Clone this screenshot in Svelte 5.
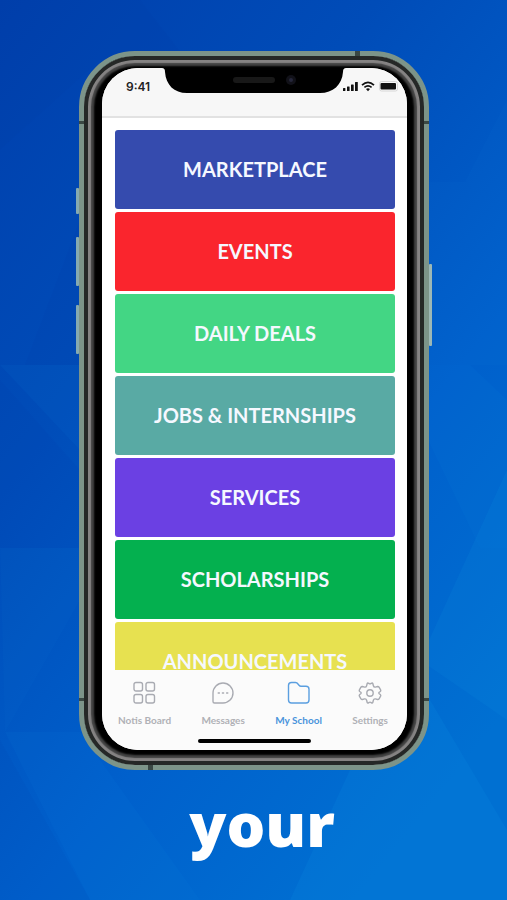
<script lang="ts">
	type Category = { title: string; color: string };
	type Tab = { id: string; label: string };

	const categories: Category[] = [
		{ title: 'MARKETPLACE', color: '#354bae' },
		{ title: 'EVENTS', color: '#fa252d' },
		{ title: 'DAILY DEALS', color: '#43d684' },
		{ title: 'JOBS & INTERNSHIPS', color: '#59aaa4' },
		{ title: 'SERVICES', color: '#6b40e3' },
		{ title: 'SCHOLARSHIPS', color: '#04b04f' },
		{ title: 'ANNOUNCEMENTS', color: '#e7e150' }
	];

	const tabs: Tab[] = [
		{ id: 'board', label: 'Notis Board' },
		{ id: 'messages', label: 'Messages' },
		{ id: 'school', label: 'My School' },
		{ id: 'settings', label: 'Settings' }
	];

	let active = $state('school');
</script>

<main class="promo">
	<svg class="backdrop" viewBox="0 0 507 900" preserveAspectRatio="none" aria-hidden="true">
		<defs>
			<linearGradient id="sky" x1="0" y1="0" x2="0.7" y2="1">
				<stop offset="0" stop-color="#003fac" />
				<stop offset="0.35" stop-color="#004cb8" />
				<stop offset="0.7" stop-color="#0060cc" />
				<stop offset="1" stop-color="#0070d2" />
			</linearGradient>
		</defs>
		<rect width="507" height="900" fill="url(#sky)" />
		<g fill="#0a8ae0">
			<polygon points="507,100 465,182 428,182 428,365 507,365" opacity="0.06" />
			<polygon points="428,365 470,365 507,400 507,548 480,548 428,440" opacity="0.08" />
			<polygon points="507,470 507,720 420,660" opacity="0.18" />
			<polygon points="350,770 430,700 507,830 507,900 290,900" opacity="0.2" />
			<polygon points="0,365 80,365 80,450" opacity="0.08" />
			<polygon points="0,548 80,548 80,600 5,732" opacity="0.06" />
			<polygon points="5,732 80,732 200,900 90,900" opacity="0.08" />
		</g>
		<g fill="#0030a0">
			<polygon points="0,0 140,0 180,51 100,60 0,150" opacity="0.06" />
			<polygon points="0,380 80,470 80,548 0,548" opacity="0.08" />
			<polygon points="80,220 80,365 25,365" opacity="0.05" />
			<polygon points="0,740 90,900 0,900" opacity="0.06" />
		</g>
	</svg>

	<div class="phone">
		<span class="side mute"></span>
		<span class="side volume-up"></span>
		<span class="side volume-down"></span>
		<span class="side power"></span>
		<span class="band top"></span>
		<span class="band bottom"></span>
		<span class="band left upper"></span>
		<span class="band left lower"></span>
		<span class="band right upper"></span>
		<span class="band right lower"></span>

		<div class="screen">
			<header class="status">
				<span class="time">9:41</span>
				<svg class="signals" viewBox="0 0 56 12" aria-hidden="true">
					<g fill="#111">
						<rect x="0" y="8" width="2.4" height="3" rx="0.5" />
						<rect x="4" y="6.5" width="2.6" height="4.5" rx="0.5" />
						<rect x="8" y="4.5" width="2.7" height="6.5" rx="0.5" />
						<rect x="12" y="2" width="2.8" height="9" rx="0.5" />
						<rect x="37.5" y="3" width="15.5" height="6.5" rx="1" />
					</g>
					<g fill="none" stroke="#111" stroke-width="1.7">
						<path d="M19 5.2Q25 -0.4 31 5.2" />
						<path d="M21.4 7.4Q25 4.4 28.6 7.4" />
					</g>
					<path d="M23 9Q25 7.4 27 9L25 11.2Z" fill="#111" />
					<rect x="36.5" y="1.5" width="18" height="9.5" rx="2" fill="none" stroke="#d8d8d8" />
				</svg>
			</header>

			<svg class="notch" viewBox="0 0 184 26" aria-hidden="true">
				<path d="M0 0C2 0 3 1 3 4C4 17 12 25 25 25H158C171 25 180 17 181 4C181 1 182 0 184 0Z" fill="#000" />
				<rect x="71" y="9" width="42" height="6" rx="3" fill="#181818" />
				<circle cx="129" cy="12" r="5" fill="#111118" />
				<circle cx="129" cy="12" r="2" fill="#25263a" />
			</svg>

			<div class="list">
				{#each categories as category}
					<button class="tile" style="background: {category.color}">{category.title}</button>
				{/each}
			</div>

			<nav class="tabs">
				{#each tabs as tab}
					<button class="tab" class:active={active === tab.id} onclick={() => (active = tab.id)}>
						<svg viewBox="0 0 24 24" aria-hidden="true">
							{#if tab.id === 'board'}
								<rect x="1" y="1.5" width="8.5" height="8.5" rx="2" />
								<rect x="13" y="1.5" width="8.5" height="8.5" rx="2" />
								<rect x="1" y="13.5" width="8.5" height="8.5" rx="2" />
								<rect x="13" y="13.5" width="8.5" height="8.5" rx="2" />
							{:else if tab.id === 'messages'}
								<path d="M2 20.5V12A10 10 0 1 1 12 22H3.5Q2 22 2 20.5Z" />
								<path d="M7.2 12h1.2M11.4 12h1.2M15.6 12h1.2" />
							{:else if tab.id === 'school'}
								<path d="M1.5 4.5Q1.5 1.5 4.5 1.5H8.5Q10 1.5 11 3L12 4.2Q12.8 5.2 14 5.2H19Q22 5.2 22 8.2V19Q22 22 19 22H4.5Q1.5 22 1.5 19Z" />
							{:else}
								<path d="M9.2 2.5Q9.6 1.5 10.8 2.4Q12 3.3 13.2 2.4Q14.4 1.5 14.8 2.5L15.4 4.8Q15.8 6.4 17.4 6.1L19.6 5.5Q20.6 5.4 21.2 6.4L22.6 8.8Q23.1 9.8 22.3 10.5L21.2 11.3Q20.5 12 21.2 12.7L22.3 13.5Q23.1 14.2 22.6 15.2L21.2 17.6Q20.6 18.6 19.6 18.5L17.4 17.9Q15.8 17.6 15.4 19.2L14.8 21.5Q14.4 22.5 13.2 21.6Q12 20.7 10.8 21.6Q9.6 22.5 9.2 21.5L8.6 19.2Q8.2 17.6 6.6 17.9L4.4 18.5Q3.4 18.6 2.8 17.6L1.4 15.2Q0.9 14.2 1.7 13.5L2.8 12.7Q3.5 12 2.8 11.3L1.7 10.5Q0.9 9.8 1.4 8.8L2.8 6.4Q3.4 5.4 4.4 5.5L6.6 6.1Q8.2 6.4 8.6 4.8Z" />
								<circle cx="12" cy="12" r="3.2" />
							{/if}
						</svg>
						<span>{tab.label}</span>
					</button>
				{/each}
			</nav>
			<div class="home"><span></span></div>
		</div>
	</div>

	<p class="caption">your</p>
</main>

<style>
	:global(body) {
		margin: 0;
	}

	.promo {
		position: relative;
		box-sizing: border-box;
		display: flex;
		flex-direction: column;
		height: 100vh;
		min-height: 600px;
		padding: 51px 78px 0 79px;
		overflow: hidden;
		background: #0052bf;
	}

	.backdrop {
		position: absolute;
		inset: 0;
		width: 100%;
		height: 100%;
	}

	.phone {
		position: relative;
		box-sizing: border-box;
		display: flex;
		flex: 1;
		min-height: 0;
		padding: 12px 17px 15px 18px;
		border: 5px solid #7c9489;
		border-radius: 56px;
		background: #000;
		box-shadow:
			inset 0 0 0 4px #252827,
			inset 0 0 1px 7px #858383,
			inset 0 0 2px 10px #444;
	}

	.side {
		position: absolute;
		left: -8px;
		width: 3px;
		background: #86aab0;
		border-radius: 1px;
	}

	.mute {
		top: 132px;
		height: 26px;
	}

	.volume-up {
		top: 181px;
		height: 49px;
	}

	.volume-down {
		top: 249px;
		height: 49px;
	}

	.power {
		top: 208px;
		right: -8px;
		left: auto;
		height: 82px;
		background: #9db8b5;
	}

	.band {
		position: absolute;
		width: 5px;
		height: 5px;
		background: #3a4844;
	}

	.band.top {
		top: -5px;
		right: 64px;
	}

	.band.bottom {
		bottom: -5px;
		left: 64px;
	}

	.band.left {
		left: -5px;
		height: 3px;
	}

	.band.right {
		right: -5px;
		height: 3px;
	}

	.band.upper {
		top: 65px;
	}

	.band.lower {
		bottom: 64px;
	}

	.screen {
		position: relative;
		display: flex;
		flex: 1;
		flex-direction: column;
		min-width: 0;
		overflow: hidden;
		border-radius: 36px;
		background: #fff;
	}

	.status {
		box-sizing: border-box;
		display: flex;
		flex-shrink: 0;
		justify-content: space-between;
		height: 50px;
		padding: 12px 8px 0 24px;
		border-bottom: 2px solid #e2e2e2;
		background: #f7f7f7;
	}

	.time {
		color: #222;
		font-family: Inter, sans-serif;
		font-size: 12px;
		font-weight: 600;
		line-height: 14px;
	}

	.signals {
		width: 56px;
		height: 12px;
	}

	.notch {
		position: absolute;
		top: 0;
		left: 50%;
		width: 184px;
		height: 26px;
		margin-left: -93px;
	}

	.list {
		display: flex;
		flex: 1;
		flex-direction: column;
		gap: 3px;
		min-height: 0;
		padding: 12px 12px 0 13px;
		overflow: hidden;
	}

	.tile {
		flex-shrink: 0;
		height: 79px;
		padding: 0 0 2px;
		border: 0;
		border-radius: 3px;
		color: #f5f8ff;
		font-family: Lato, sans-serif;
		font-size: 20px;
		font-weight: 700;
		line-height: 20px;
		cursor: pointer;
	}

	.tabs {
		display: flex;
		flex-shrink: 0;
		justify-content: space-between;
		padding: 11px 19px 0 16px;
		background: #fbfbfb;
	}

	.tab {
		display: flex;
		flex-direction: column;
		align-items: center;
		gap: 8px;
		padding: 0;
		border: 0;
		background: none;
		color: #b0b1b6;
		font-family: Lato, sans-serif;
		font-size: 10px;
		font-weight: 700;
		line-height: 14px;
		cursor: pointer;
	}

	.tab svg {
		width: 24px;
		height: 24px;
		fill: none;
		stroke: #a9abb2;
		stroke-width: 1.4;
		stroke-linejoin: round;
		stroke-linecap: round;
	}

	.tab.active {
		color: #4a94dc;
	}

	.tab.active svg {
		stroke: #5b9fe0;
	}

	.home {
		display: flex;
		flex-shrink: 0;
		justify-content: center;
		padding: 12px 0 7px;
		background: #fbfbfb;
	}

	.home span {
		width: 113px;
		height: 4px;
		border-radius: 2px;
		background: #000;
	}

	.caption {
		position: relative;
		margin: 0;
		padding: 14px 0 36px 16px;
		color: #fff;
		font-family: 'Open Sans', sans-serif;
		font-size: 61px;
		font-weight: 800;
		line-height: 80px;
		text-align: center;
	}
</style>
